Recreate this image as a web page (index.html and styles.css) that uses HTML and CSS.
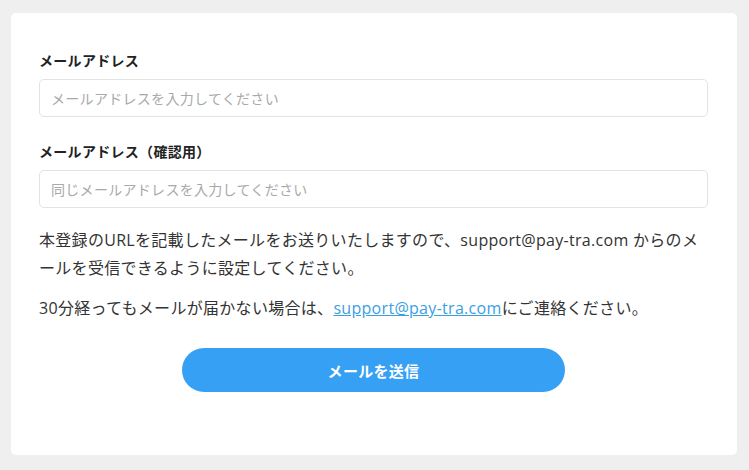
FILE: index.html
```html
<!DOCTYPE html>
<html lang="ja">
<head>
<meta charset="utf-8">
<title>メール送信</title>
<link rel="stylesheet" href="styles.css">
</head>
<body>
<main class="card">
  <form class="form">
    <div class="field">
      <label class="label" for="email">メールアドレス</label>
      <input class="input" id="email" type="email" placeholder="メールアドレスを入力してください">
    </div>
    <div class="field field-second">
      <label class="label" for="email2">メールアドレス（確認用）</label>
      <input class="input" id="email2" type="email" placeholder="同じメールアドレスを入力してください">
    </div>
    <p class="note note-first">本登録のURLを記載したメールをお送りいたしますので、support@pay-tra.com からのメールを受信できるように設定してください。</p>
    <p class="note note-second">30分経ってもメールが届かない場合は、<a class="link" href="#">support@pay-tra.com</a>にご連絡ください。</p>
    <div class="actions">
      <button class="button" type="button">メールを送信</button>
    </div>
  </form>
</main>
</body>
</html>
```

FILE: styles.css
```css
html, body {
  margin: 0;
  padding: 0;
}

body {
  background: #efefef;
  font-family: "Open Sans", "Noto Sans CJK JP", sans-serif;
  color: #333333;
  padding: 13px 12px 15px 11px;
}

.card {
  box-sizing: border-box;
  height: 442px;
  background: #ffffff;
  border-radius: 5px;
  padding: 37px 29px 0 28px;
}

.form {
  display: flex;
  flex-direction: column;
}

.field {
  display: flex;
  flex-direction: column;
  gap: 9px;
}

.field-second {
  margin-top: 24px;
}

.label {
  font-family: "Noto Sans CJK JP", sans-serif;
  font-size: 14px;
  line-height: 20px;
  font-weight: 700;
  color: #222222;
  letter-spacing: 0.3px;
}

.input {
  box-sizing: border-box;
  height: 38px;
  width: 100%;
  border: 1px solid #e3e3e3;
  border-radius: 5px;
  padding: 0 11px;
  font-family: "Open Sans", "Noto Sans CJK JP", sans-serif;
  font-size: 14px;
  letter-spacing: 0.3px;
  color: #333333;
  background: #ffffff;
  outline: none;
}

.input::placeholder {
  color: #a9a9a9;
}

.note {
  margin: 0;
  font-size: 16px;
  line-height: 28px;
  letter-spacing: 0.3px;
  color: #333333;
  word-break: break-all;
}

.note-first {
  margin-top: 18px;
}

.note-second {
  margin-top: 12px;
}

.link {
  color: #3a9fe2;
  text-decoration: underline;
}

.actions {
  display: flex;
  justify-content: center;
  margin-top: 26px;
}

.button {
  width: 383px;
  height: 44px;
  border: none;
  border-radius: 22px;
  background: #36a0f4;
  color: #ffffff;
  font-family: "Noto Sans CJK JP", sans-serif;
  font-size: 15px;
  font-weight: 700;
  letter-spacing: 0.3px;
  cursor: pointer;
}
```
